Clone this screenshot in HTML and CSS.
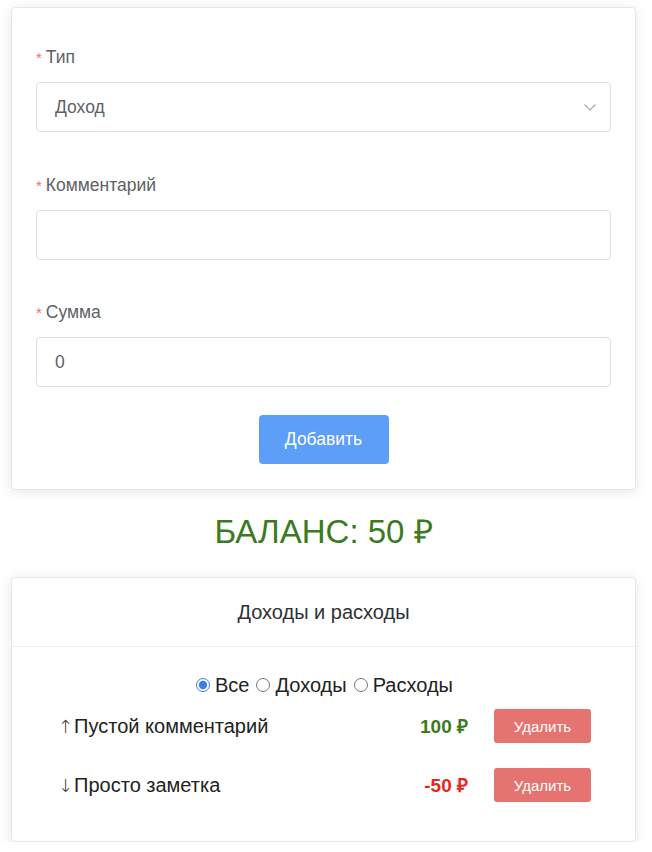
FILE: index.html
```html
<!DOCTYPE html>
<html lang="ru">
<head>
<meta charset="utf-8">
<link rel="stylesheet" href="styles.css">
</head>
<body>
<div class="page">
  <div class="card form-card">
    <div class="form-item">
      <label class="label"><span class="req">*</span>Тип</label>
      <div class="input select">
        <span class="value">Доход</span>
        <svg class="chev" width="14" height="14" viewBox="0 0 14 14"><path d="M1.5 4.5 L7 10 L12.5 4.5" fill="none" stroke="#a8abb2" stroke-width="1.2"/></svg>
      </div>
    </div>
    <div class="form-item">
      <label class="label"><span class="req">*</span>Комментарий</label>
      <div class="input"></div>
    </div>
    <div class="form-item">
      <label class="label"><span class="req">*</span>Сумма</label>
      <div class="input"><span class="value">0</span></div>
    </div>
    <div class="actions">
      <button class="btn-primary">Добавить</button>
    </div>
  </div>

  <div class="balance">БАЛАНС: 50 ₽</div>

  <div class="card list-card">
    <div class="card-header">Доходы и расходы</div>
    <div class="card-body">
      <div class="filters">
        <label class="radio"><input type="radio" name="f" checked>Все</label>
        <label class="radio"><input type="radio" name="f">Доходы</label>
        <label class="radio"><input type="radio" name="f">Расходы</label>
      </div>
      <div class="row">
        <span class="comment"><span class="arrow">↑</span>Пустой комментарий</span>
        <span class="amount plus">100 ₽</span>
        <button class="btn-danger">Удалить</button>
      </div>
      <div class="row">
        <span class="comment"><span class="arrow">↓</span>Просто заметка</span>
        <span class="amount minus">-50 ₽</span>
        <button class="btn-danger">Удалить</button>
      </div>
    </div>
  </div>
</div>
</body>
</html>
```
FILE: styles.css
```css
* { box-sizing: border-box; }
html, body { margin: 0; padding: 0; background: #fff; }
body { font-family: "Liberation Sans", Arial, sans-serif; }
.page { width: 625px; margin-left: 11px; padding-top: 7px; }
.card {
  background: #fff;
  border: 1px solid #e4e7ed;
  border-radius: 4px;
  box-shadow: 0 2px 12px rgba(0,0,0,0.1);
}
.form-card { padding: 33px 24px 25px 24px; }
.form-item { margin-bottom: 37px; }
.form-item:nth-child(2) { margin-bottom: 36px; }
.form-item:nth-child(3) { margin-bottom: 28px; }
.label {
  display: block;
  height: 32px;
  line-height: 32px;
  font-size: 17.5px;
  color: #606266;
  margin-bottom: 9px;
}
.req { color: #f56c6c; margin-right: 4px; font-size: 15px; }
.input {
  height: 50px;
  border: 1px solid #dcdfe6;
  border-radius: 4px;
  display: flex;
  align-items: center;
  padding: 0 18px;
  font-size: 17.5px;
  color: #606266;
}
.select { justify-content: space-between; }
.chev { margin-right: -5px; }
.actions { display: flex; justify-content: center; }
.btn-primary {
  width: 130px;
  height: 49px;
  border: none;
  border-radius: 4px;
  background: #5c9ef8;
  color: #fff;
  font-family: "Liberation Sans", Arial, sans-serif;
  font-size: 17.5px;
}
.balance {
  text-align: center;
  color: #3b7a1f;
  font-size: 33px;
  line-height: 40px;
  margin: 22px 0 25px;
}
.card-header {
  height: 69px;
  line-height: 69px;
  text-align: center;
  font-size: 20px;
  color: #303133;
  border-bottom: 1px solid #ebeef5;
}
.card-body { padding: 23px 44px 39px 46px; }
.filters {
  display: flex;
  justify-content: center;
  font-size: 20px;
  color: #222;
  height: 30px;
  align-items: center;
}
.radio { display: flex; align-items: center; }
.radio input { margin: 0 5px 0 7px; width: 14px; height: 14px; accent-color: #3a7ee6; }
.radio:first-child input { margin-left: 0; }
.row {
  display: flex;
  align-items: center;
  height: 34px;
  margin-top: 9px;
  font-size: 20px;
  color: #222;
}
.row + .row { margin-top: 25px; }
.comment { flex: 1; display: flex; align-items: center; }
.arrow { font-family: "DejaVu Sans", sans-serif; font-weight: 200; font-size: 18px; margin-right: 1px; color: #333; }
.amount { font-weight: bold; font-size: 19px; margin-right: 26px; }
.plus { color: #3b7a1f; }
.minus { color: #e8271c; }
.btn-danger {
  width: 97px;
  height: 34px;
  border: none;
  border-radius: 3px;
  background: #e57470;
  color: #fff;
  font-family: "Liberation Sans", Arial, sans-serif;
  font-size: 15px;
}
```
